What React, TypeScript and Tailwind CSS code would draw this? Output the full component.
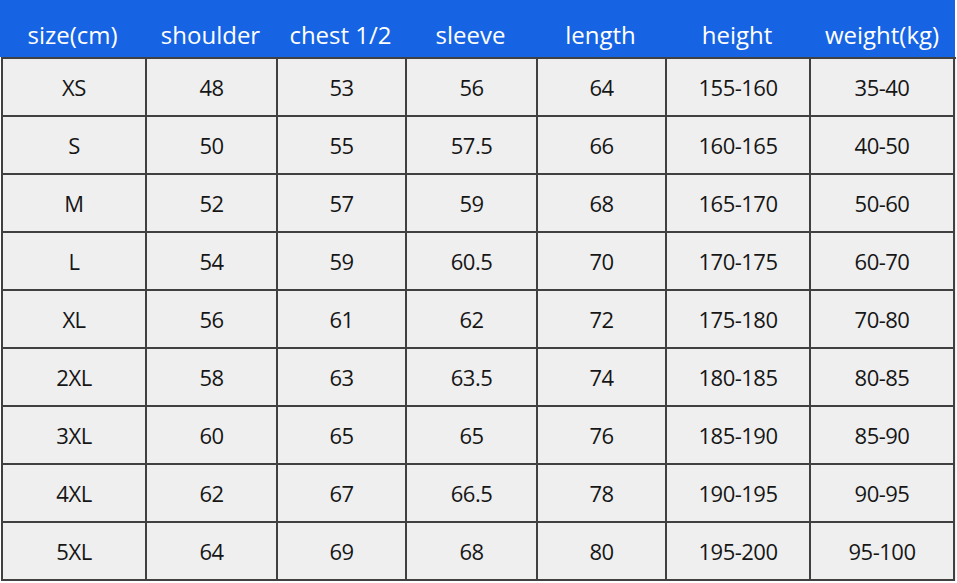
const headers = ['size(cm)', 'shoulder', 'chest 1/2', 'sleeve', 'length', 'height', 'weight(kg)']

const rows = [
  ['XS', '48', '53', '56', '64', '155-160', '35-40'],
  ['S', '50', '55', '57.5', '66', '160-165', '40-50'],
  ['M', '52', '57', '59', '68', '165-170', '50-60'],
  ['L', '54', '59', '60.5', '70', '170-175', '60-70'],
  ['XL', '56', '61', '62', '72', '175-180', '70-80'],
  ['2XL', '58', '63', '63.5', '74', '180-185', '80-85'],
  ['3XL', '60', '65', '65', '76', '185-190', '85-90'],
  ['4XL', '62', '67', '66.5', '78', '190-195', '90-95'],
  ['5XL', '64', '69', '68', '80', '195-200', '95-100'],
]

const App = () => {
  return (
    <div className="w-[957px] h-[583px] bg-white overflow-hidden" style={{ fontFamily: '"Open Sans", "Noto Sans", sans-serif' }}>
      {/* Header */}
      <div className="w-[955px] h-[57px] bg-[#1664e4] grid grid-cols-[145px_131px_129px_131px_129px_144px_146px] items-center pt-[12px]">
        {headers.map((h) => (
          <div key={h} className="text-center text-white text-[24px] leading-none">
            {h}
          </div>
        ))}
      </div>

      {/* Body */}
      <div className="ml-[1px] w-[955px] border-l-2 border-t-2 border-[#404040] grid grid-cols-[144px_131px_129px_131px_129px_144px_144px] bg-[#efefef]">
        {rows.map((row, r) =>
          row.map((cell, c) => (
            <div
              key={`${r}-${c}`}
              className="h-[58px] border-r-2 border-b-2 border-[#404040] flex items-center justify-center text-[22px] text-[#161616] tracking-[-0.5px]"
            >
              {cell}
            </div>
          ))
        )}
      </div>
    </div>
  )
}

export default App
